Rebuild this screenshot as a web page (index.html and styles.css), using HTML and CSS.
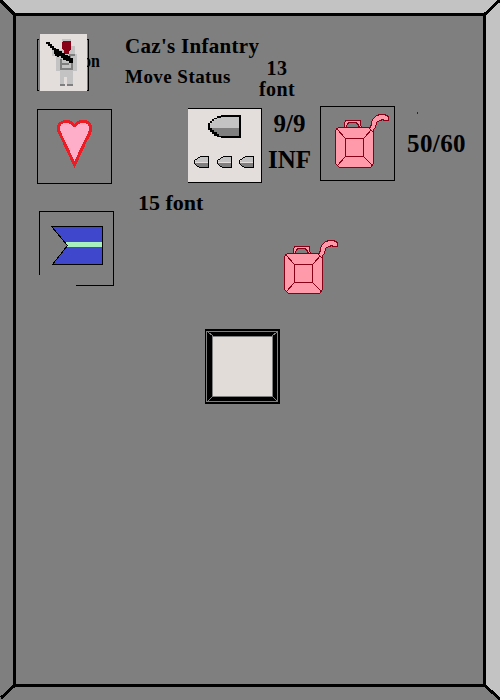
FILE: index.html
```html
<!DOCTYPE html>
<html lang="en">
<head>
<meta charset="utf-8">
<title>Caz's Infantry</title>
<link rel="stylesheet" href="styles.css">
</head>
<body>
<svg class="frame" width="500" height="700" shape-rendering="crispEdges">
  <path fill="#c3c3c3" d="M0 0H500V700L485 686V14H14Z"/>
  <path fill="none" stroke="#000" stroke-width="3" d="M14.5 14.5H484.5V685.5H14.5ZM0 0L15 15M500 0L484 15M484 685L500 699M15 685L1 698"/>
</svg>
<svg width="0" height="0" class="defs">
  <defs>
    <g id="can" fill="#ff9aaa" stroke="#880015" stroke-width="1">
      <path d="M24.5 21.5V17.5L25.5 14.5H40.5V17.5L41.5 21.5H39.5L37.5 17.5L35.5 16.5H29.5L27.5 17.5L26.5 21.5Z"/>
      <path d="M18.5 21.5H50.5L53.5 24.5V57.5L50.5 61.5H19.5L15.5 57.5V24.5Z"/>
      <path d="M25.5 32.5H43.5V50.5H25.5ZM16.5 22.5L25.5 32.5M52.5 22.5L43.5 32.5M17.5 59.5L25.5 50.5M52.5 59.5L43.5 50.5"/>
      <path d="M49.5 22.5L51.5 18.5V15.5L53.5 12.5L56.5 9.5L60.5 8.5H64.5L68.5 10.5V14.5H63.5V13.5L59.5 14.5L56.5 16.5L55.5 21.5L53.5 23.5V26.5Z"/>
    </g>
    <g id="round">
      <path fill="#c3c3c3" d="M.5 6V5.500L3.500 2.500L6.500 .5H14.500V6Z"/>
      <path fill="#7f7f7f" d="M1 7H14.500V11.500H6.500L3 10Z"/>
      <path fill="none" stroke="#000" d="M14.500 .5V11.500H6.500L3.500 10.500L.5 7.500V4.500L3.500 2.500L6.500 .5Z"/>
    </g>
  </defs>
</svg>
<main class="panel">
  <header class="row unit">
    <div class="portrait">
      <span class="peek">on</span>
      <svg class="soldier" width="52" height="57" shape-rendering="crispEdges">
        <path d="M2 5H0V57H2V56H1V6H2ZM50 5H52V57H50V56H51V6H50Z"/>
        <path fill="#e3dedb" d="M3 0H50V57H3Z"/>
        <path fill="#c3c3c3" d="M25 5H34V12H38V20H40V37H36V52H30V43H27V52H23V37H19V22H15V16H25Z"/>
        <path fill="#7f7f7f" d="M32 20H38V22H34V25H32ZM23 25H25V29H32V31H25V34H34V29H36V36H23ZM23 50H28V52H23ZM30 50H36V52H30Z"/>
        <path fill="#880015" d="M26 7H33L34 8V15L32 17V20H27V17L25 15V8Z"/>
        <path d="M9 8H13V10H15V12H17V14H19V15H22V17H25V19H28V21H31V22H33V24H36V29H32V27H29V26H26V24H24V22H22V23H20V22H18V20H17V16H15V14H13V12H11V10H9Z"/>
      </svg>
    </div>
    <div class="titles">
      <h1 class="name">Caz's Infantry</h1>
      <p class="status">Move Status</p>
    </div>
    <p class="thirteen">13<br>font</p>
  </header>

  <section class="row stats">
    <svg class="heart" width="75" height="75" shape-rendering="crispEdges">
      <path class="box" d="M.5 .5H74.500V74.500H.5Z"/>
      <path fill="#ffaec9" stroke="#ed1c24" stroke-width="3" d="M37.500 16.500L34 13.500L31 12.500H27L23 14.500L21.500 17.500V21L23.500 26L27 33L33 46L37.500 55.500L42 46L48 33L52.500 24.500L53.500 21V17L51.500 14L48.500 12.500H43L40.500 14Z"/>
    </svg>
    <svg class="ammo" width="74" height="75" shape-rendering="crispEdges">
      <path fill="#e3dedb" d="M0 0H74V75H0Z"/>
      <path class="box" d="M0 .5H73.500V74.500H0"/>
      <path fill="#c3c3c3" d="M21 20V17L27 11L34 8H52V20Z"/>
      <path fill="#7f7f7f" d="M21 20H52V29H33L26 26Z"/>
      <path d="M33 7H53V30H33V29H29V28H26V26H24V24H22V22H20V15H22V13H24V11H26V10H29V8H33ZM33 9V10H29V11H26V13H24V15H22V20H24V22H26V24H29V26H31V28H51V9Z" fill-rule="evenodd"/>
      <use href="#round" x="6" y="48"/>
      <use href="#round" x="29" y="48"/>
      <use href="#round" x="51" y="48"/>
    </svg>
    <p class="count">9/9<br>INF</p>
    <svg class="fuel" width="75" height="75" shape-rendering="crispEdges">
      <path class="box" d="M.5 .5H74.500V74.500H.5Z"/>
      <use href="#can"/>
    </svg>
    <div class="level">
      <i class="speck"></i>
      <p class="liters">50/60</p>
    </div>
  </section>

  <section class="row extras">
    <svg class="flag" width="75" height="75" shape-rendering="crispEdges">
      <path class="box" d="M.5 64V.5H74.500V74.500H37"/>
      <path fill="#3f48cc" d="M12.500 15.500H63.500V53.500H13.500L28.500 34.500Z"/>
      <path fill="#a8f0bd" d="M26 31H63V36H27L28 34Z"/>
      <path class="box" d="M12.500 15.500H63.500V53.500H13.500L28.500 34.500Z"/>
    </svg>
    <p class="fifteen">15 font</p>
    <svg class="spare" width="75" height="75" shape-rendering="crispEdges"><use href="#can"/></svg>
  </section>

  <svg class="slot" width="75" height="75" shape-rendering="crispEdges">
    <path d="M0 0H75V75H0Z"/>
    <path fill="none" stroke="#7f7f7f" d="M1.500 2.500H72.500V72.500H1.500ZM7.500 7.500H67.500V67.500H7.500ZM3 3L8 7M72 3L67 7M3 72L8 67M72 72L67 67"/>
    <path fill="#e1dcd8" d="M8 8H67V67H8Z"/>
  </svg>
</main>
</body>
</html>
```
FILE: styles.css
```css
body {
  margin: 0;
  background: #7f7f7f;
  color: #000;
  font-family: "Liberation Serif", serif;
  font-weight: bold;
}

.frame {
  position: absolute;
  top: 0;
  left: 0;
}

.defs {
  position: absolute;
}

.panel {
  position: relative;
  box-sizing: border-box;
  width: 500px;
  height: 700px;
  padding: 34px 0 0 37px;
  overflow: hidden;
}

svg {
  display: block;
}

h1,
p {
  margin: 0;
  font-weight: bold;
  white-space: nowrap;
}

.box {
  fill: none;
  stroke: #000;
}

.row {
  display: grid;
  align-items: start;
}

.unit {
  grid-template-columns: 88px 133px 38px;
  height: 72px;
}

.portrait {
  position: relative;
}

.soldier {
  position: relative;
}

.peek {
  position: absolute;
  left: 46px;
  top: 17px;
  font-size: 19px;
  line-height: 20px;
  transform: scaleX(0.84);
  transform-origin: left;
}

.titles {
  padding-top: 2px;
}

.name {
  font-size: 21px;
  line-height: 20px;
  letter-spacing: 0.3px;
}

.status {
  margin-top: 11px;
  font-size: 19px;
  line-height: 20px;
  letter-spacing: 0.45px;
}

.thirteen {
  margin-top: 24px;
  font-size: 20px;
  line-height: 21px;
  letter-spacing: 0.4px;
  text-align: center;
}

.stats {
  grid-template-columns: 151px 80px 52px 87px 60px;
  height: 80px;
}

.heart {
  margin-top: 3px;
}

.ammo {
  margin-top: 2px;
}

.count {
  font-size: 25px;
  line-height: 36px;
  text-align: center;
  width: 43px;
}

.speck {
  display: block;
  width: 1px;
  height: 2px;
  margin: 6px 0 0 10px;
  background: #880015;
}

.liters {
  margin-top: 12px;
  font-size: 25px;
  line-height: 36px;
  letter-spacing: 0.4px;
}

.extras {
  grid-template-columns: 101px 131px 75px;
  height: 143px;
}

.flag {
  margin: 25px 0 0 2px;
}

.fifteen {
  margin-top: 7px;
  font-size: 22px;
  line-height: 20px;
}

.spare {
  margin-top: 46px;
}

.slot {
  margin-left: 168px;
}
```
